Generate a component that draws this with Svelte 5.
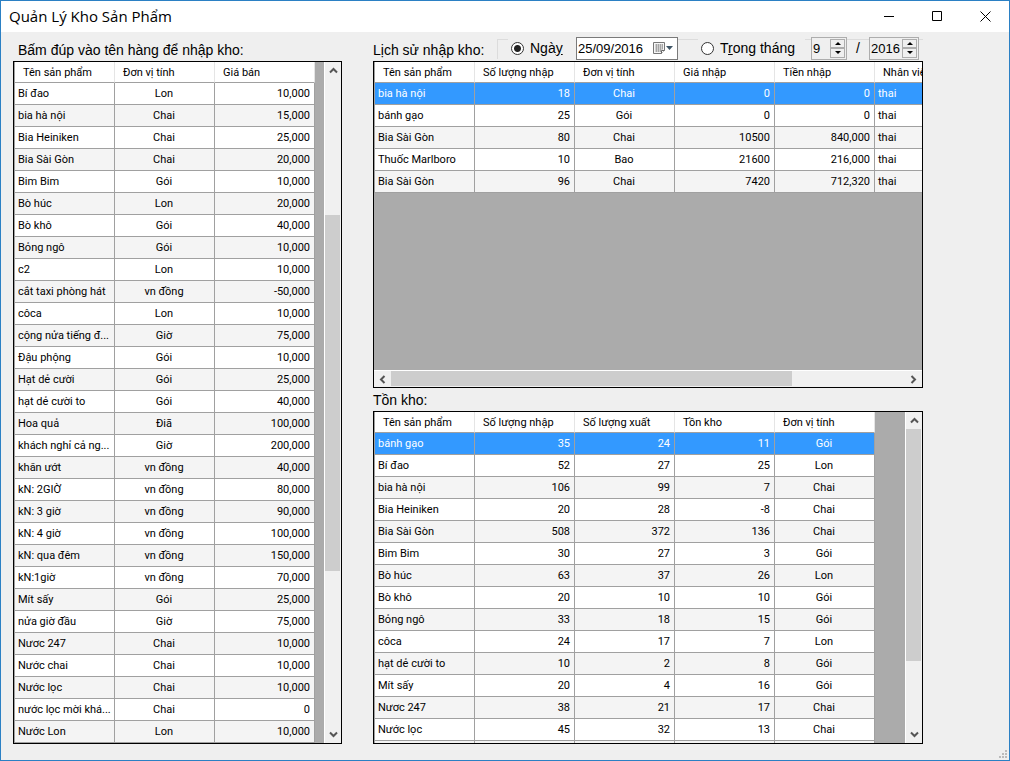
<script lang="ts">
  type Column = { label: string; align: 'left' | 'center' | 'right' };

  const L = (label: string): Column => ({ label, align: 'left' });
  const C = (label: string): Column => ({ label, align: 'center' });
  const R = (label: string): Column => ({ label, align: 'right' });

  const productColumns = [L('Tên sản phẩm'), C('Đơn vị tính'), R('Giá bán')];
  const products = [
    ['Bí đao', 'Lon', '10,000'],
    ['bia hà nội', 'Chai', '15,000'],
    ['Bia Heiniken', 'Chai', '25,000'],
    ['Bia Sài Gòn', 'Chai', '20,000'],
    ['Bim Bim', 'Gói', '10,000'],
    ['Bò húc', 'Lon', '20,000'],
    ['Bò khô', 'Gói', '40,000'],
    ['Bỏng ngô', 'Gói', '10,000'],
    ['c2', 'Lon', '10,000'],
    ['cắt taxi phòng hát', 'vn đồng', '-50,000'],
    ['côca', 'Lon', '10,000'],
    ['cộng nửa tiếng đ...', 'Giờ', '75,000'],
    ['Đậu phộng', 'Gói', '10,000'],
    ['Hạt dẻ cười', 'Gói', '25,000'],
    ['hạt dẻ cười to', 'Gói', '40,000'],
    ['Hoa quả', 'Điã', '100,000'],
    ['khách nghỉ cả ng...', 'Giờ', '200,000'],
    ['khăn ướt', 'vn đồng', '40,000'],
    ['kN: 2GIỜ', 'vn đồng', '80,000'],
    ['kN: 3 giờ', 'vn đồng', '90,000'],
    ['kN: 4 giờ', 'vn đồng', '100,000'],
    ['kN: qua đêm', 'vn đồng', '150,000'],
    ['kN:1giờ', 'vn đồng', '70,000'],
    ['Mít sấy', 'Gói', '25,000'],
    ['nửa giờ đầu', 'Giờ', '75,000'],
    ['Nươc 247', 'Chai', '10,000'],
    ['Nước chai', 'Chai', '10,000'],
    ['Nước lọc', 'Chai', '10,000'],
    ['nước lọc mời khá...', 'Chai', '0'],
    ['Nước Lon', 'Lon', '10,000'],
  ];

  const historyColumns = [
    L('Tên sản phẩm'), R('Số lượng nhập'), C('Đơn vị tính'),
    R('Giá nhập'), R('Tiền nhập'), L('Nhân viên'),
  ];
  const history = [
    ['bia hà nội', '18', 'Chai', '0', '0', 'thai'],
    ['bánh gạo', '25', 'Gói', '0', '0', 'thai'],
    ['Bia Sài Gòn', '80', 'Chai', '10500', '840,000', 'thai'],
    ['Thuốc Marlboro', '10', 'Bao', '21600', '216,000', 'thai'],
    ['Bia Sài Gòn', '96', 'Chai', '7420', '712,320', 'thai'],
  ];

  const stockColumns = [
    L('Tên sản phẩm'), R('Số lượng nhập'), R('Số lượng xuất'), R('Tồn kho'), C('Đơn vị tính'),
  ];
  const stock = [
    ['bánh gạo', '35', '24', '11', 'Gói'],
    ['Bí đao', '52', '27', '25', 'Lon'],
    ['bia hà nội', '106', '99', '7', 'Chai'],
    ['Bia Heiniken', '20', '28', '-8', 'Chai'],
    ['Bia Sài Gòn', '508', '372', '136', 'Chai'],
    ['Bim Bim', '30', '27', '3', 'Gói'],
    ['Bò húc', '63', '37', '26', 'Lon'],
    ['Bò khô', '20', '10', '10', 'Gói'],
    ['Bỏng ngô', '33', '18', '15', 'Gói'],
    ['côca', '24', '17', '7', 'Lon'],
    ['hạt dẻ cười to', '10', '2', '8', 'Gói'],
    ['Mít sấy', '20', '4', '16', 'Gói'],
    ['Nươc 247', '38', '21', '17', 'Chai'],
    ['Nước lọc', '45', '32', '13', 'Chai'],
    ['', '', '', '', ''],
  ];

  let mode = $state('day');
  let date = $state('25/09/2016');
  let month = $state(9);
  let year = $state(2016);
  let historyRow = $state(0);
  let stockRow = $state(0);
  let productRow = $state(-1);
</script>

{#snippet grid(id: string, columns: Column[], rows: string[][], selected: number, pick: (i: number) => void)}
  <div class="viewport">
    <table aria-labelledby={id}>
      <thead>
        <tr>
          {#each columns as c}<th scope="col">{c.label}</th>{/each}
        </tr>
      </thead>
      <tbody>
        {#each rows as row, i}
          <tr class:selected={i === selected} onclick={() => pick(i)}>
            {#each row as cell, j}<td class={columns[j].align}>{cell}</td>{/each}
          </tr>
        {/each}
      </tbody>
    </table>
  </div>
{/snippet}

{#snippet chevron(d: string)}
  <svg width="9" height="9" viewBox="0 0 9 9" aria-hidden="true"><path {d} fill="none" stroke="#555" stroke-width="2" /></svg>
{/snippet}

{#snippet scrollbar(dir: string, before: number, size: number)}
  <div class="scroll {dir}">
    <button aria-label={dir === 'v' ? 'Lên' : 'Trái'}>
      {@render chevron(dir === 'v' ? 'M1 6.5 4.5 3 8 6.5' : 'M6.5 1 3 4.5 6.5 8')}
    </button>
    <div class="track">
      <span style="flex: {before} 0 0"></span>
      <span class="thumb" style="flex: {size} 0 0"></span>
      <span style="flex: {100 - before - size} 0 0"></span>
    </div>
    <button aria-label={dir === 'v' ? 'Xuống' : 'Phải'}>
      {@render chevron(dir === 'v' ? 'M1 2.5 4.5 6 8 2.5' : 'M2.5 1 6 4.5 2.5 8')}
    </button>
  </div>
{/snippet}

{#snippet spin(up: () => void, down: () => void)}
  <span class="spin">
    <button aria-label="Tăng" onclick={up}><svg width="6" height="3" viewBox="0 0 6 3"><path d="M0 3 3 0 6 3z" /></svg></button>
    <button aria-label="Giảm" onclick={down}><svg width="6" height="3" viewBox="0 0 6 3"><path d="M0 0 3 3 6 0z" /></svg></button>
  </span>
{/snippet}

<div class="window">
  <header>
    <h1>Quản Lý Kho Sản Phẩm</h1>
    <div class="caption">
      <button aria-label="Thu nhỏ"><svg width="11" height="11" viewBox="0 0 11 11"><path d="M0 5.5h10" /></svg></button>
      <button aria-label="Phóng to"><svg width="11" height="11" viewBox="0 0 11 11"><path d="M.5.5h9v9h-9z" /></svg></button>
      <button aria-label="Đóng"><svg width="11" height="11" viewBox="0 0 11 11"><path d="m.5.5 10 10m0-10-10 10" /></svg></button>
    </div>
  </header>

  <main>
    <section class="products">
      <h2 id="products-title" class="inset">Bấm đúp vào tên hàng để nhập kho:</h2>
      <div class="panel shift">
        {@render grid('products-title', productColumns, products, productRow, (i) => (productRow = i))}
        {@render scrollbar('v', 21, 55)}
      </div>
    </section>

    <section class="reports">
      <div class="toolbar">
        <h2 id="history-title">Lịch sử nhập kho:</h2>
        <fieldset aria-label="Lọc theo thời gian">
          <label class="radio"><input type="radio" name="mode" value="day" bind:group={mode} /><span>Ngà<u>y</u></span></label>
          <span class="date">
            <input type="text" aria-label="Ngày nhập" bind:value={date} />
            <button aria-label="Mở lịch">
              <svg width="21" height="14" viewBox="0 0 21 14">
                <path d="M.5 1.5h11v8l-3 3h-8z" fill="#f6f6f6" stroke="#777" />
                <path d="M2 4h8M2 6h8M2 8h8M2 10h6M3.5 3v8M5.5 3v8M7.5 3v8M9.5 3v5" stroke="#999" stroke-width=".8" />
                <path d="M11.500 9.500h-3v3" fill="#fff" stroke="#666" />
                <path d="M13 5h7l-3.500 4z" fill="#3f5566" />
              </svg>
            </button>
          </span>
          <label class="radio month"><input type="radio" name="mode" value="month" bind:group={mode} /><span>T<u>r</u>ong tháng</span></label>
          <span class="number">
            <input type="text" aria-label="Tháng" bind:value={month} />
            {@render spin(() => (month = Math.min(12, month + 1)), () => (month = Math.max(1, month - 1)))}
          </span>
          <span class="slash">/</span>
          <span class="number year">
            <input type="text" aria-label="Năm" bind:value={year} />
            {@render spin(() => year++, () => year--)}
          </span>
        </fieldset>
      </div>
      <div class="panel column history">
        {@render grid('history-title', historyColumns, history, historyRow, (i) => (historyRow = i))}
        {@render scrollbar('h', 0, 78)}
      </div>

      <h2 id="stock-title" class="lower">Tồn kho:</h2>
      <div class="panel stock">
        {@render grid('stock-title', stockColumns, stock, stockRow, (i) => (stockRow = i))}
        {@render scrollbar('v', 0, 78)}
      </div>
    </section>
  </main>

  <svg class="grip" width="9" height="9" viewBox="0 0 9 9" aria-hidden="true">
    <path d="M6 0h2v2H6zM3 3h2v2H3zM6 3h2v2H6zM0 6h2v2H0zM3 6h2v2H3zM6 6h2v2H6z" fill="#bbb" />
  </svg>
</div>

<style>
  :global(body) {
    margin: 0;
    background: #efefef;
  }
  .window, .window * {
    box-sizing: border-box;
  }
  .window {
    position: relative;
    display: flex;
    flex-direction: column;
    min-height: 100vh;
    border: 1px solid #2b80c4;
    background: #efefef;
    color: #000;
    font-family: "Liberation Sans", Arial, sans-serif;
    font-size: 14px;
  }
  button {
    display: flex;
    align-items: center;
    justify-content: center;
    margin: 0;
    padding: 0;
    border: 0;
    background: none;
  }
  header {
    display: flex;
    justify-content: space-between;
    height: 31px;
    padding-left: 8px;
    background: #fff;
  }
  h1 {
    margin: 0;
    font: 400 15px/31px "Open Sans", "Noto Sans", sans-serif;
  }
  .caption {
    display: flex;
  }
  .caption button {
    width: 48px;
  }
  .caption path {
    fill: none;
    stroke: #000;
  }
  main {
    flex: 1;
    display: flex;
    gap: 31px;
    padding: 4px 86px 16px 12px;
  }
  section {
    display: flex;
    flex-direction: column;
  }
  .products {
    flex: 0 0 329px;
  }
  .reports {
    flex: 1;
    min-width: 0;
  }
  h2 {
    margin: 0;
    height: 25px;
    padding-top: 4px;
    font-size: 14px;
    font-weight: 400;
    line-height: 21px;
    white-space: nowrap;
  }
  .inset {
    padding-left: 5px;
  }
  .lower {
    height: 23px;
    padding-top: 2px;
  }
  .toolbar {
    display: flex;
    height: 25px;
  }
  .toolbar h2 {
    width: 124px;
  }
  fieldset {
    flex: 1;
    display: flex;
    align-items: center;
    min-width: 0;
    height: 20px;
    margin: 3px 0 0;
    padding: 0 3px 3px 10px;
    border: solid #dcdcdc;
    border-width: 1px 0 0 1px;
  }
  .radio {
    display: flex;
    align-items: center;
    gap: 6px;
    width: 68px;
    height: 22px;
    padding-left: 3px;
    background: #efefef;
    white-space: nowrap;
  }
  .radio.month {
    width: 107px;
    margin-left: 20px;
  }
  .radio input {
    appearance: none;
    width: 13px;
    height: 13px;
    margin: 0;
    border: 1px solid #333;
    border-radius: 50%;
    background: #fff;
  }
  .radio input:checked {
    background: radial-gradient(circle, #222 3px, #fff 4px);
  }
  .date, .number {
    display: flex;
    flex: none;
    height: 23px;
  }
  .date {
    width: 102px;
    border: 1px solid #7a7a7a;
    background: #fff;
  }
  .date input, .number input {
    flex: 1;
    width: 0;
    padding: 0 0 0 1px;
    border: 0;
    background: none;
    color: #000;
    font: 13px "Liberation Sans", Arial, sans-serif;
  }
  .date button {
    width: 27px;
  }
  .number {
    width: 36px;
    margin-left: 6px;
    padding: 1px;
    border: 1px solid #adadad;
    background: #efefef;
  }
  .number.year {
    width: 50px;
    margin-left: 0;
  }
  .number input {
    padding: 0;
  }
  .spin {
    display: flex;
    flex-direction: column;
    width: 15px;
  }
  .spin button {
    flex: 1;
    border: 1px solid #adadad;
  }
  .slash {
    width: 22px;
    background: #efefef;
    text-align: center;
  }
  .panel {
    display: flex;
    border: 1px solid #000;
    background: #ababab;
  }
  .column {
    flex-direction: column;
  }
  .history {
    flex: 327 0 0;
    min-height: 0;
  }
  .stock {
    flex: 333 0 0;
    min-height: 0;
  }
  .viewport {
    flex: 1;
    min-width: 0;
    min-height: 0;
    overflow: hidden;
  }
  .stock .viewport {
    flex-basis: 0;
    contain: size;
  }
  table {
    width: max-content;
    border-left: 1px solid #a0a0a0;
    border-spacing: 0;
    table-layout: fixed;
    font: 11px/14px Roboto, "Liberation Sans", sans-serif;
  }
  th, td {
    width: 100px;
    min-width: 100px;
    max-width: 100px;
    height: 22px;
    padding: 0 4px 0 3px;
    border: solid #a0a0a0;
    border-width: 0 1px 1px 0;
    overflow: hidden;
    white-space: nowrap;
  }
  th {
    height: 21px;
    padding: 1px 0 0 8px;
    border-right-color: #e5e5e5;
    background: #fff;
    font-weight: 400;
    text-align: left;
  }
  tbody tr {
    background: #fff;
  }
  tbody tr:nth-child(odd), .shift tbody tr:nth-child(even) {
    background: #f4f4f4;
  }
  .panel tbody tr:nth-child(1), .shift tbody tr:nth-child(odd) {
    background: #fff;
  }
  .panel tbody tr.selected:nth-child(n) {
    background: #3399ff;
    color: #fff;
  }
  .center {
    text-align: center;
  }
  .right {
    text-align: right;
  }
  .scroll {
    flex: none;
    display: flex;
    background: #f0f0f0;
  }
  .scroll button {
    flex: none;
    width: 16px;
    height: 17px;
  }
  .scroll .track {
    flex: 1;
    display: flex;
  }
  .v, .v .track {
    flex-direction: column;
  }
  .v {
    width: 17px;
    border-left: 1px solid #fff;
  }
  .h {
    height: 17px;
    border-top: 1px solid #fff;
  }
  .h button {
    width: 17px;
    height: 16px;
  }
  .thumb {
    background: #cdcdcd;
  }
  .v .thumb {
    margin-right: 1px;
  }
  .h .thumb {
    margin-bottom: 1px;
  }
  .grip {
    position: absolute;
    right: 1px;
    bottom: 1px;
  }
</style>
